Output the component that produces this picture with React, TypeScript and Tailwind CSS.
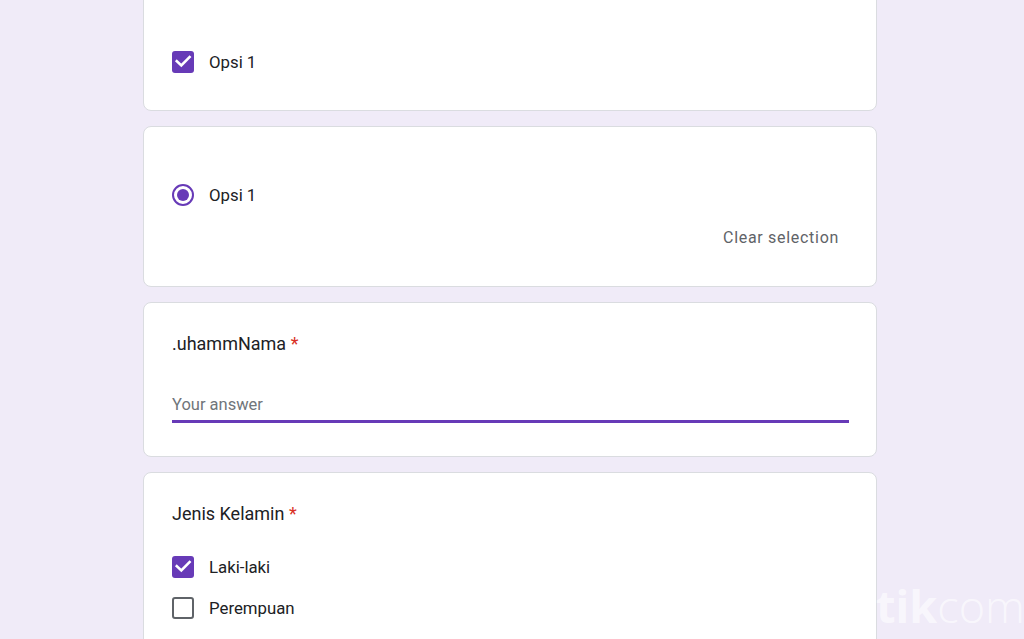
import React from "react";

const Check = () => (
  <div className="w-[22px] h-[22px] rounded-[3px] bg-[#673ab7] flex items-center justify-center shrink-0">
    <svg width="22" height="22" viewBox="0 0 22 22" fill="none">
      <path d="M4.8 10.2L9.3 14.4L17.6 6" stroke="#fff" strokeWidth="2.6" strokeLinecap="square" />
    </svg>
  </div>
);

const Uncheck = () => (
  <div className="w-[22px] h-[22px] rounded-[3px] border-2 border-[#5f6368] shrink-0" />
);

const Radio = () => (
  <div className="w-[22px] h-[22px] rounded-full border-2 border-[#673ab7] flex items-center justify-center shrink-0">
    <div className="w-[12px] h-[12px] rounded-full bg-[#673ab7]" />
  </div>
);

const Card = ({ className = "", children }: { className?: string; children: React.ReactNode }) => (
  <div className={`bg-white rounded-[8px] border border-[#dadce0] pl-[28px] pr-[27px] ${className}`}>{children}</div>
);

const Option = ({ box, label }: { box: React.ReactNode; label: string }) => (
  <div className="flex items-center gap-[15px]">
    {box}
    <span className="text-[16.8px] text-[#202124] leading-[22px]">{label}</span>
  </div>
);

export default function App() {
  return (
    <div
      className="w-[1024px] h-[639px] overflow-hidden bg-[#f0ebf8] relative"
      style={{ fontFamily: "Roboto, 'Liberation Sans', sans-serif" }}
    >
      <div className="w-[734px] ml-[143px] flex flex-col gap-[15px]">
        <Card className="-mt-[12px] h-[123px] pt-[62px]">
          <Option box={<Check />} label="Opsi 1" />
        </Card>

        <Card className="h-[161px] pt-[57px]">
          <Option box={<Radio />} label="Opsi 1" />
          <div className="flex justify-end pr-[10px] mt-[22px]">
            <span className="text-[16px] leading-[20px] text-[#5f6368] tracking-[0.7px]">Clear selection</span>
          </div>
        </Card>

        <Card className="h-[155px] pt-[29px]">
          <div className="text-[18px] leading-[24px] text-[#202124]">
            .uhammNama <span className="text-[#d93025]">*</span>
          </div>
          <div className="mt-[39px] text-[16.5px] leading-[20px] text-[#70757a]">Your answer</div>
          <div className="mt-[5px] h-[3px] bg-[#673ab7]" />
        </Card>

        <Card className="h-[200px] pt-[29px]">
          <div className="text-[18px] leading-[24px] text-[#202124]">
            Jenis Kelamin <span className="text-[#d93025]">*</span>
          </div>
          <div className="mt-[30px] flex flex-col gap-[19px]">
            <Option box={<Check />} label="Laki-laki" />
            <Option box={<Uncheck />} label="Perempuan" />
          </div>
        </Card>
      </div>

      <div
        className="absolute left-[821px] top-[583px] text-[45px] leading-[45px] text-white/60 whitespace-nowrap select-none"
        style={{ fontFamily: "'Open Sans', sans-serif" }}
      >
        <span className="font-bold">detik</span>
        <span className="font-light">com</span>
      </div>
    </div>
  );
}
